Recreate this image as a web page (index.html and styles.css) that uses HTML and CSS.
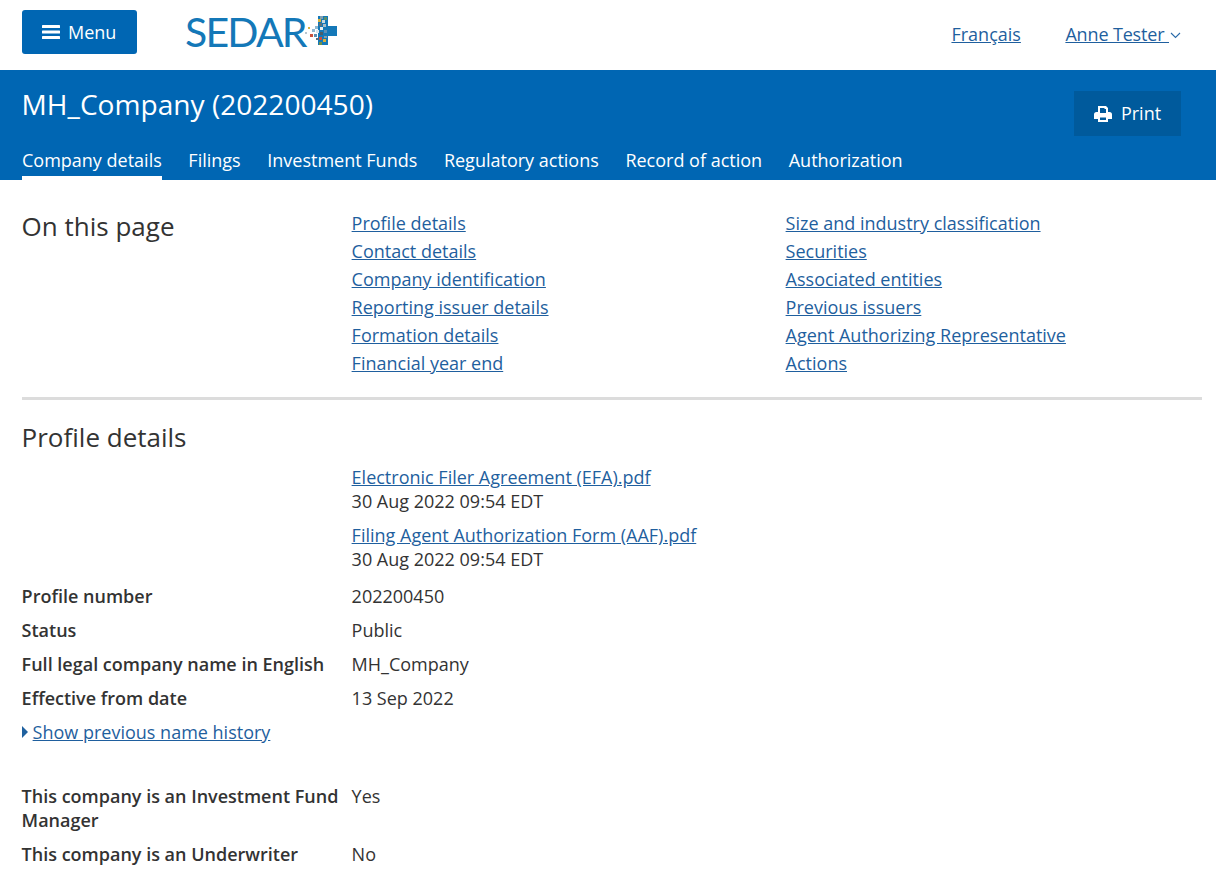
FILE: index.html
```html
<!DOCTYPE html>
<html lang="en">
<head>
<meta charset="utf-8">
<title>MH_Company (202200450)</title>
<link rel="stylesheet" href="styles.css">
</head>
<body>
<header class="topbar">
  <button class="menu-btn">
    <svg class="menu-icon" width="18" height="14" viewBox="0 0 18 14"><rect y="0" width="18" height="3" rx="0.6"/><rect y="5.5" width="18" height="3" rx="0.6"/><rect y="11" width="18" height="3" rx="0.6"/></svg>
    <span>Menu</span>
  </button>
  <div class="logo">
    <span class="logo-text">SEDAR</span>
    <svg class="logo-plus" width="36" height="30" viewBox="0 0 36 30">
      <rect x="17" y="0" width="10" height="29" fill="#1478b8"/>
      <rect x="17" y="10" width="19" height="10" fill="#1478b8"/>
      <rect x="19" y="0" width="3" height="3" fill="#7f9fb0"/><rect x="23" y="1" width="3" height="3" fill="#5c8f6a"/>
      <rect x="17" y="3" width="3" height="3" fill="#d9b23c"/><rect x="21" y="4" width="3" height="3" fill="#c8d6de"/>
      <rect x="18" y="7" width="3" height="3" fill="#5c6f7c"/><rect x="22" y="8" width="3" height="3" fill="#a9bcc8"/>
      <rect x="19" y="11" width="3" height="3" fill="#e8eef2"/><rect x="14" y="10" width="3" height="3" fill="#8fb8d2"/>
      <rect x="11" y="13" width="3" height="3" fill="#8fb8d2"/><rect x="15" y="14" width="3" height="3" fill="#dbe6ec"/>
      <rect x="19" y="16" width="3" height="3" fill="#4a5d6a"/><rect x="23" y="14" width="3" height="3" fill="#5f8fb4"/>
      <rect x="18" y="21" width="3" height="3" fill="#c9503c"/><rect x="22" y="23" width="3" height="3" fill="#d9b23c"/>
      <rect x="18" y="26" width="3" height="3" fill="#6f8f4a"/><rect x="23" y="20" width="3" height="2" fill="#8a9aa5"/>
      <rect x="7" y="11" width="2" height="2" fill="#d9b23c"/><rect x="4" y="16" width="2" height="2" fill="#b9c6cf"/>
      <rect x="9" y="18" width="3" height="3" fill="#c9503c"/><rect x="13" y="18" width="3" height="3" fill="#5c8fb0"/>
      <rect x="15" y="22" width="2" height="2" fill="#5c6f7c"/>
    </svg>
  </div>
  <nav class="top-links">
    <a href="#">Français</a>
    <a class="user-link" href="#">Anne Tester <svg class="chev" width="11" height="7" viewBox="0 0 11 7"><path d="M1 1l4.500 4.500L10 1" fill="none" stroke="#2a6aa8" stroke-width="1.100"/></svg></a>
  </nav>
</header>

<section class="band">
  <div class="band-head">
    <h1>MH_Company (202200450)</h1>
    <button class="print-btn">
      <svg width="18" height="18" viewBox="0 0 18 18"><path fill="#fff" d="M4 1h8l2 2v4h1.500A2.500 2.500 0 0 1 18 9.500V14h-4v3H4v-3H0V9.500A2.500 2.500 0 0 1 2.500 7H4zM6 3v5h6V4h-1.500V3zM6 12.500V15h6v-2.500z"/></svg>
      <span class="print-label">Print</span>
    </button>
  </div>
  <nav class="tabs">
    <a class="tab active" href="#">Company details</a>
    <a class="tab" href="#">Filings</a>
    <a class="tab" href="#">Investment Funds</a>
    <a class="tab" href="#">Regulatory actions</a>
    <a class="tab" href="#">Record of action</a>
    <a class="tab" href="#">Authorization</a>
  </nav>
</section>

<main class="content">
  <section class="toc">
    <h2 class="toc-title">On this page</h2>
    <ul class="toc-col">
      <li><a href="#">Profile details</a></li>
      <li><a href="#">Contact details</a></li>
      <li><a href="#">Company identification</a></li>
      <li><a href="#">Reporting issuer details</a></li>
      <li><a href="#">Formation details</a></li>
      <li><a href="#">Financial year end</a></li>
    </ul>
    <ul class="toc-col">
      <li><a href="#">Size and industry classification</a></li>
      <li><a href="#">Securities</a></li>
      <li><a href="#">Associated entities</a></li>
      <li><a href="#">Previous issuers</a></li>
      <li><a href="#">Agent Authorizing Representative</a></li>
      <li><a href="#">Actions</a></li>
    </ul>
  </section>

  <section class="profile">
    <h2 class="section-title">Profile details</h2>
    <div class="docs">
      <div class="doc"><a href="#">Electronic Filer Agreement (EFA).pdf</a><div>30 Aug 2022 09:54 EDT</div></div>
      <div class="doc"><a href="#">Filing Agent Authorization Form (AAF).pdf</a><div>30 Aug 2022 09:54 EDT</div></div>
    </div>
    <dl class="fields">
      <div class="field"><dt>Profile number</dt><dd>202200450</dd></div>
      <div class="field"><dt>Status</dt><dd>Public</dd></div>
      <div class="field"><dt>Full legal company name in English</dt><dd>MH_Company</dd></div>
      <div class="field"><dt>Effective from date</dt><dd>13 Sep 2022</dd></div>
    </dl>
    <div class="history"><svg class="caret" width="6" height="12" viewBox="0 0 6 12"><path d="M0 0l6 6-6 6z" fill="#1f619f"/></svg><a href="#">Show previous name history</a></div>
    <dl class="fields">
      <div class="field"><dt>This company is an Investment Fund Manager</dt><dd>Yes</dd></div>
      <div class="field"><dt>This company is an Underwriter</dt><dd>No</dd></div>
    </dl>
  </section>
</main>
</body>
</html>
```
FILE: styles.css
```css
* { box-sizing: border-box; }
html, body { margin: 0; padding: 0; }
body {
  font-family: "Open Sans", "Noto Sans", sans-serif;
  font-size: 18px;
  line-height: 24px;
  color: #333;
  background: #fff;
  height: 874px;
  overflow: hidden;
}
a { color: #1f5f9e; text-decoration: underline; }
h1, h2, ul, dl, dd { margin: 0; padding: 0; }
ul { list-style: none; }

.topbar {
  height: 70px;
  display: flex;
  align-items: flex-start;
  padding: 10px 35px 0 22px;
}
.menu-btn {
  width: 115px;
  height: 44px;
  background: #0066b3;
  color: #fff;
  border: 0;
  border-radius: 3px;
  font: inherit;
  display: flex;
  align-items: center;
  justify-content: flex-start;
  padding: 0 0 0 20px;
  gap: 8px;
}
.menu-icon { fill: #fff; }
.logo {
  margin-left: 48px;
  height: 44px;
  display: flex;
  align-items: center;
}
.logo-text {
  font-family: "Lato", sans-serif;
  font-size: 41px;
  line-height: 44px;
  letter-spacing: -1.8px;
  color: #1478b8;
  font-weight: 400;
  width: 116px;
}
.logo-plus { margin-top: -2px; }
.top-links {
  margin-left: auto;
  display: flex;
  gap: 44.5px;
  padding-top: 12px;
}
.user-link { letter-spacing: -0.15px; }
.chev { margin-left: 1px; vertical-align: 2px; }

.band {
  height: 110px;
  background: #0066b3;
  color: #fff;
  padding: 0 35px 0 21.6px;
  display: flex;
  flex-direction: column;
}
.band-head {
  display: flex;
  justify-content: space-between;
  align-items: flex-start;
  height: 67px;
}
h1 {
  font-size: 28.1px;
  line-height: 38px;
  font-weight: 400;
  padding-top: 15px;
}
.print-btn {
  margin-top: 21px;
  width: 107px;
  height: 45px;
  background: #005a9c;
  color: #fff;
  border: 0;
  font: inherit;
  display: flex;
  align-items: center;
  justify-content: center;
  gap: 9px;
}
.print-label { margin-top: -2px; }
.tabs { display: flex; gap: 26.6px; margin-left: 0.4px; }
.tab {
  color: #fff;
  text-decoration: none;
  height: 43px;
  padding-top: 11px;
}
.tab.active { border-bottom: 4px solid #fff; }

.content { padding: 0 14px 0 21.6px; }
.toc {
  display: grid;
  grid-template-columns: 330px 434px 1fr;
  padding: 29px 0 20px;
  border-bottom: 3px solid #dcdcdc;
}
.toc-title, .section-title { font-size: 26px; line-height: 34px; font-weight: 400; }
.toc-col li { height: 28px; line-height: 28px; }
.section-title { margin-top: 20px; }

.docs { margin-left: 330px; padding-top: 11px; }
.doc { margin-bottom: 10px; }
.field { display: flex; margin-bottom: 10px; }
.docs + .fields { margin-top: 13px; }
dt { width: 330px; padding-right: 10px; font-weight: 600; }
.history { height: 24px; display: flex; align-items: center; gap: 5px; margin-bottom: 40px; }
.caret { flex: none; }
```
